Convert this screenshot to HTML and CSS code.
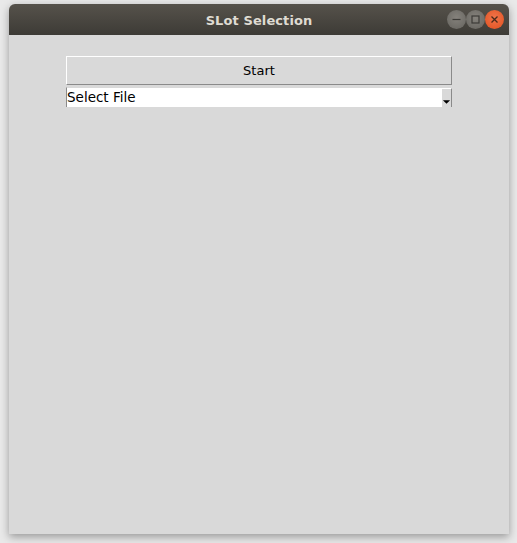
FILE: index.html
```html
<!DOCTYPE html>
<html>
<head>
<meta charset="utf-8">
<link rel="stylesheet" href="styles.css">
</head>
<body>
<div class="window">
  <div class="titlebar">
    <span class="title">SLot Selection</span>
    <div class="controls">
      <span class="ctl ctl-min"><svg width="19" height="19" viewBox="0 0 19 19"><line x1="5.5" y1="9.5" x2="13.5" y2="9.5" stroke="#3c3b37" stroke-width="1.2"/></svg></span>
      <span class="ctl ctl-max"><svg width="19" height="19" viewBox="0 0 19 19"><rect x="6" y="6" width="7" height="7" fill="none" stroke="#3c3b37" stroke-width="1.2"/></svg></span>
      <span class="ctl ctl-close"><svg width="19" height="19" viewBox="0 0 19 19"><path d="M6.5 6.5 L12.5 12.5 M12.5 6.5 L6.5 12.5" stroke="#4a2a1a" stroke-width="1.3"/></svg></span>
    </div>
  </div>
  <div class="content">
    <div class="button">Start</div>
    <div class="combo">
      <span class="combo-text">Select File</span>
      <span class="combo-arrow"><svg width="10" height="6" viewBox="0 0 10 6"><path d="M1 1 L9 1 L5 5 Z" fill="#000"/></svg></span>
    </div>
  </div>
</div>
</body>
</html>
```
FILE: styles.css
```css
html, body {
  margin: 0;
  padding: 0;
  background: #e9e9e9;
  width: 517px;
  height: 543px;
  overflow: hidden;
}
.window {
  margin: 4px 0 0 9px;
  width: 500px;
  height: 530px;
  background: #d9d9d9;
  border-radius: 6px 6px 0 0;
  box-shadow: 0 3px 9px rgba(0,0,0,0.35);
  display: flex;
  flex-direction: column;
}
.titlebar {
  height: 31px;
  border-radius: 6px 6px 0 0;
  background: linear-gradient(#56524b, #3d3b36);
  display: flex;
  align-items: center;
  justify-content: center;
  position: relative;
}
.title {
  font-family: "DejaVu Sans", sans-serif;
  font-weight: bold;
  font-size: 13px;
  color: #dfdbd2;
  letter-spacing: 0.1px;
  padding-top: 1px;
}
.controls {
  position: absolute;
  right: 5px;
  top: 6px;
  display: flex;
  gap: 0;
}
.ctl {
  width: 19px;
  height: 19px;
  border-radius: 50%;
  display: flex;
}
.ctl-min, .ctl-max {
  background: radial-gradient(circle at 50% 40%, #85827c, #65635e);
}
.ctl-close {
  background: radial-gradient(circle at 50% 40%, #f0744a, #e0501f);
}
.content {
  flex: 1;
  padding: 21px 0 0 57px;
  display: flex;
  flex-direction: column;
  gap: 2px;
}
.button {
  width: 384px;
  height: 27px;
  border-top: 1px solid #ffffff;
  border-left: 1px solid #ffffff;
  border-right: 1px solid #8a8a8a;
  border-bottom: 1px solid #8a8a8a;
  background: #d9d9d9;
  font-family: "DejaVu Sans", sans-serif;
  font-size: 13px;
  color: #000;
  display: flex;
  align-items: center;
  justify-content: center;
}
.combo {
  width: 385px;
  height: 19px;
  border-left: 1px solid #8a8a8a;
  border-top: 1px solid #d9d9d9;
  background: #ffffff;
  display: flex;
  align-items: center;
  justify-content: space-between;
}
.combo-text {
  font-family: "DejaVu Sans", sans-serif;
  font-size: 13.5px;
  color: #000;
  margin-top: -2px;
}
.combo-arrow {
  width: 11px;
  background: #d9d9d9;
  border-left: 1px solid #ffffff;
  border-top: 1px solid #ffffff;
  border-right: 1px solid #8a8a8a;
  display: flex;
  align-items: flex-end;
  justify-content: center;
  padding-bottom: 2px;
  box-sizing: border-box;
  height: 19px;
}
```
